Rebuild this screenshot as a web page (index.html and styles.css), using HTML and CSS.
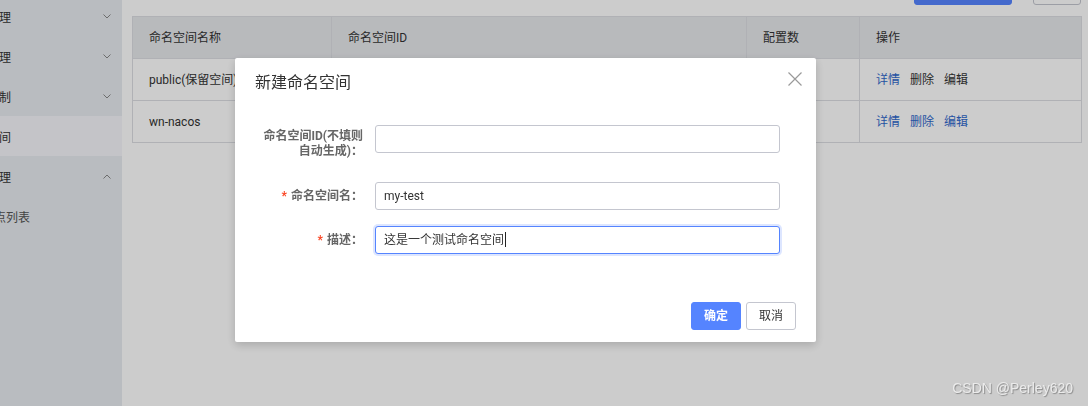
FILE: index.html
```html
<!DOCTYPE html>
<html lang="zh-CN">
<head>
<meta charset="utf-8">
<title>命名空间</title>
<link rel="stylesheet" href="styles.css">
</head>
<body>
<div class="app">
  <aside class="sidebar">
    <ul class="menu">
      <li class="menu-item"><span class="menu-text">配置管理</span><svg class="chev" width="8" height="5" viewBox="0 0 8 5"><path d="M0.5 0.5 L4 4 L7.5 0.5" fill="none" stroke="#888" stroke-width="1"/></svg></li>
      <li class="menu-item"><span class="menu-text">服务管理</span><svg class="chev" width="8" height="5" viewBox="0 0 8 5"><path d="M0.5 0.5 L4 4 L7.5 0.5" fill="none" stroke="#888" stroke-width="1"/></svg></li>
      <li class="menu-item"><span class="menu-text">权限控制</span><svg class="chev" width="8" height="5" viewBox="0 0 8 5"><path d="M0.5 0.5 L4 4 L7.5 0.5" fill="none" stroke="#888" stroke-width="1"/></svg></li>
      <li class="menu-item active"><span class="menu-text">命名空间</span></li>
      <li class="menu-item"><span class="menu-text">集群管理</span><svg class="chev" width="8" height="5" viewBox="0 0 8 5"><path d="M0.5 4.5 L4 1 L7.5 4.5" fill="none" stroke="#888" stroke-width="1"/></svg></li>
      <li class="menu-item sub"><span class="menu-text">节点列表</span></li>
    </ul>
  </aside>
  <main class="main">
    <div class="toolbar">
      <button class="tbtn tbtn-primary">新建命名空间</button>
      <button class="tbtn tbtn-normal">刷新</button>
    </div>
    <table class="ns-table">
      <colgroup>
        <col class="c1"><col class="c2"><col class="c3"><col class="c4">
      </colgroup>
      <thead>
        <tr><th>命名空间名称</th><th>命名空间ID</th><th>配置数</th><th>操作</th></tr>
      </thead>
      <tbody>
        <tr>
          <td>public(保留空间)</td><td></td><td>0</td>
          <td><a class="op link">详情</a><a class="op plain">删除</a><a class="op plain">编辑</a></td>
        </tr>
        <tr>
          <td>wn-nacos</td><td>3f8a1c2e-wn-nacos</td><td>2</td>
          <td><a class="op link">详情</a><a class="op link">删除</a><a class="op link">编辑</a></td>
        </tr>
      </tbody>
    </table>
  </main>
</div>

<div class="mask"></div>

<div class="dialog">
  <div class="dialog-header">新建命名空间</div>
  <button class="dialog-close" aria-label="关闭">
    <svg width="14" height="14" viewBox="0 0 14 14"><path d="M0.5 0.5 L13.5 13.5 M13.5 0.5 L0.5 13.5" stroke="#9a9a9a" stroke-width="1.2" fill="none"/></svg>
  </button>
  <div class="dialog-body">
    <div class="form-row first">
      <label class="form-label two-line">命名空间ID(不填则<br>自动生成)：</label>
      <div class="input"></div>
    </div>
    <div class="form-row">
      <label class="form-label"><span class="req">*</span>命名空间名：</label>
      <div class="input">my-test</div>
    </div>
    <div class="form-row">
      <label class="form-label"><span class="req">*</span>描述：</label>
      <div class="input focused">这是一个测试命名空间<span class="caret"></span></div>
    </div>
  </div>
  <div class="dialog-footer">
    <button class="btn btn-primary">确定</button>
    <button class="btn btn-normal">取消</button>
  </div>
</div>

<div class="watermark">CSDN @Perley620</div>
</body>
</html>
```

FILE: styles.css
```css
* { box-sizing: border-box; }

html, body {
  margin: 0;
  padding: 0;
  height: 406px;
  overflow: hidden;
}

body {
  font-family: Roboto, "Noto Sans CJK SC", sans-serif;
  font-size: 12px;
  color: #333;
  background: #fff;
}

.app {
  display: flex;
  height: 406px;
}

/* Sidebar */
.sidebar {
  width: 122px;
  flex: none;
  background: #e8ecf0;
  overflow: hidden;
}

.menu {
  list-style: none;
  margin: -4px 0 0 -37px;
  padding: 0;
  width: 159px;
}

.menu-item {
  height: 40px;
  display: flex;
  align-items: center;
  justify-content: space-between;
  padding-right: 11px;
  font-size: 12px;
  color: #333;
  white-space: nowrap;
}

.menu-item.active { background: #f6f5fa; }

.menu-item.sub { padding-left: 19px; color: #555; }

.chev { display: block; flex: none; }

/* Main */
.main {
  flex: 1;
  padding: 0 7px 0 10px;
}

.toolbar {
  display: flex;
  justify-content: flex-end;
  gap: 21px;
  margin-top: -23px;
  margin-bottom: 11px;
  padding-right: 1px;
  height: 28px;
}

.tbtn {
  height: 28px;
  border-radius: 3px;
  font: inherit;
  padding: 0;
}

.tbtn-primary {
  width: 98px;
  background: #5584ff;
  border: 1px solid #5584ff;
  color: #fff;
}

.tbtn-normal {
  width: 48px;
  background: #fff;
  border: 1px solid #c4c6cf;
  color: #333;
}

.ns-table {
  width: 949px;
  border-collapse: collapse;
  table-layout: fixed;
  border: 1px solid #dcdee3;
}

.c1 { width: 199px; }
.c2 { width: 415px; }
.c3 { width: 113px; }
.c4 { width: 222px; }

.ns-table th,
.ns-table td {
  height: 42px;
  padding: 0 16px;
  text-align: left;
  font-weight: normal;
  line-height: 18px;
  border: 1px solid #dcdee3;
  white-space: nowrap;
  overflow: visible;
}

.ns-table th { background: #e7e9ec; }

.op { margin-right: 10px; cursor: pointer; }
.op.link { color: #2f68cc; }
.op.plain { color: #333; }

/* Overlay */
.mask {
  position: fixed;
  inset: 0;
  background: rgba(0, 0, 0, 0.2);
}

/* Dialog */
.dialog {
  position: fixed;
  left: 235px;
  top: 58px;
  width: 581px;
  background: #fff;
  border-radius: 2px;
  box-shadow: 0 3px 10px rgba(0, 0, 0, 0.18);
}

.dialog-header {
  padding: 12px 20px;
  font-size: 16px;
  line-height: 25px;
  color: #333;
}

.dialog-close {
  position: absolute;
  top: 14px;
  right: 14px;
  width: 14px;
  height: 14px;
  padding: 0;
  border: 0;
  background: transparent;
}

.dialog-close svg { display: block; }

.dialog-body {
  padding: 18px 36px 36px 20px;
}

.form-row {
  display: grid;
  grid-template-columns: 108px 1fr;
  column-gap: 12px;
  margin-bottom: 16px;
}

.form-row:last-child { margin-bottom: 0; }

.form-label {
  text-align: right;
  font-weight: bold;
  color: #666;
  line-height: 28px;
  white-space: nowrap;
}

.form-label.two-line {
  line-height: 15px;
  padding: 4px 0 7px;
}

.req {
  color: #fa4422;
  margin-right: 4px;
  font-weight: bold;
}

.input {
  height: 28px;
  border: 1px solid #c4c6cf;
  border-radius: 3px;
  padding: 0 8px;
  line-height: 26px;
  color: #333;
  background: #fff;
  white-space: nowrap;
}

.input.focused {
  border-color: #5584ff;
  box-shadow: 0 0 0 2px rgba(85, 132, 255, 0.2);
}

.caret {
  display: inline-block;
  width: 1px;
  height: 15px;
  background: #222;
  vertical-align: -3px;
  margin-left: 1px;
}

.dialog-footer {
  display: flex;
  justify-content: flex-end;
  gap: 5px;
  padding: 12px 20px;
}

.btn {
  height: 28px;
  padding: 0 12px;
  border-radius: 3px;
  font: inherit;
  line-height: 26px;
}

.btn-primary {
  background: #5584ff;
  border: 1px solid #5584ff;
  color: #fff;
  font-weight: bold;
}

.btn-normal {
  background: #fff;
  border: 1px solid #c4c6cf;
  color: #333;
}

/* Watermark */
.watermark {
  position: fixed;
  right: 15px;
  bottom: 10px;
  font-family: "Liberation Sans", Arial, sans-serif;
  font-size: 14px;
  line-height: 16px;
  color: #ebebeb;
  text-shadow: 1px 1px 1px #8a8a8a;
}
```
